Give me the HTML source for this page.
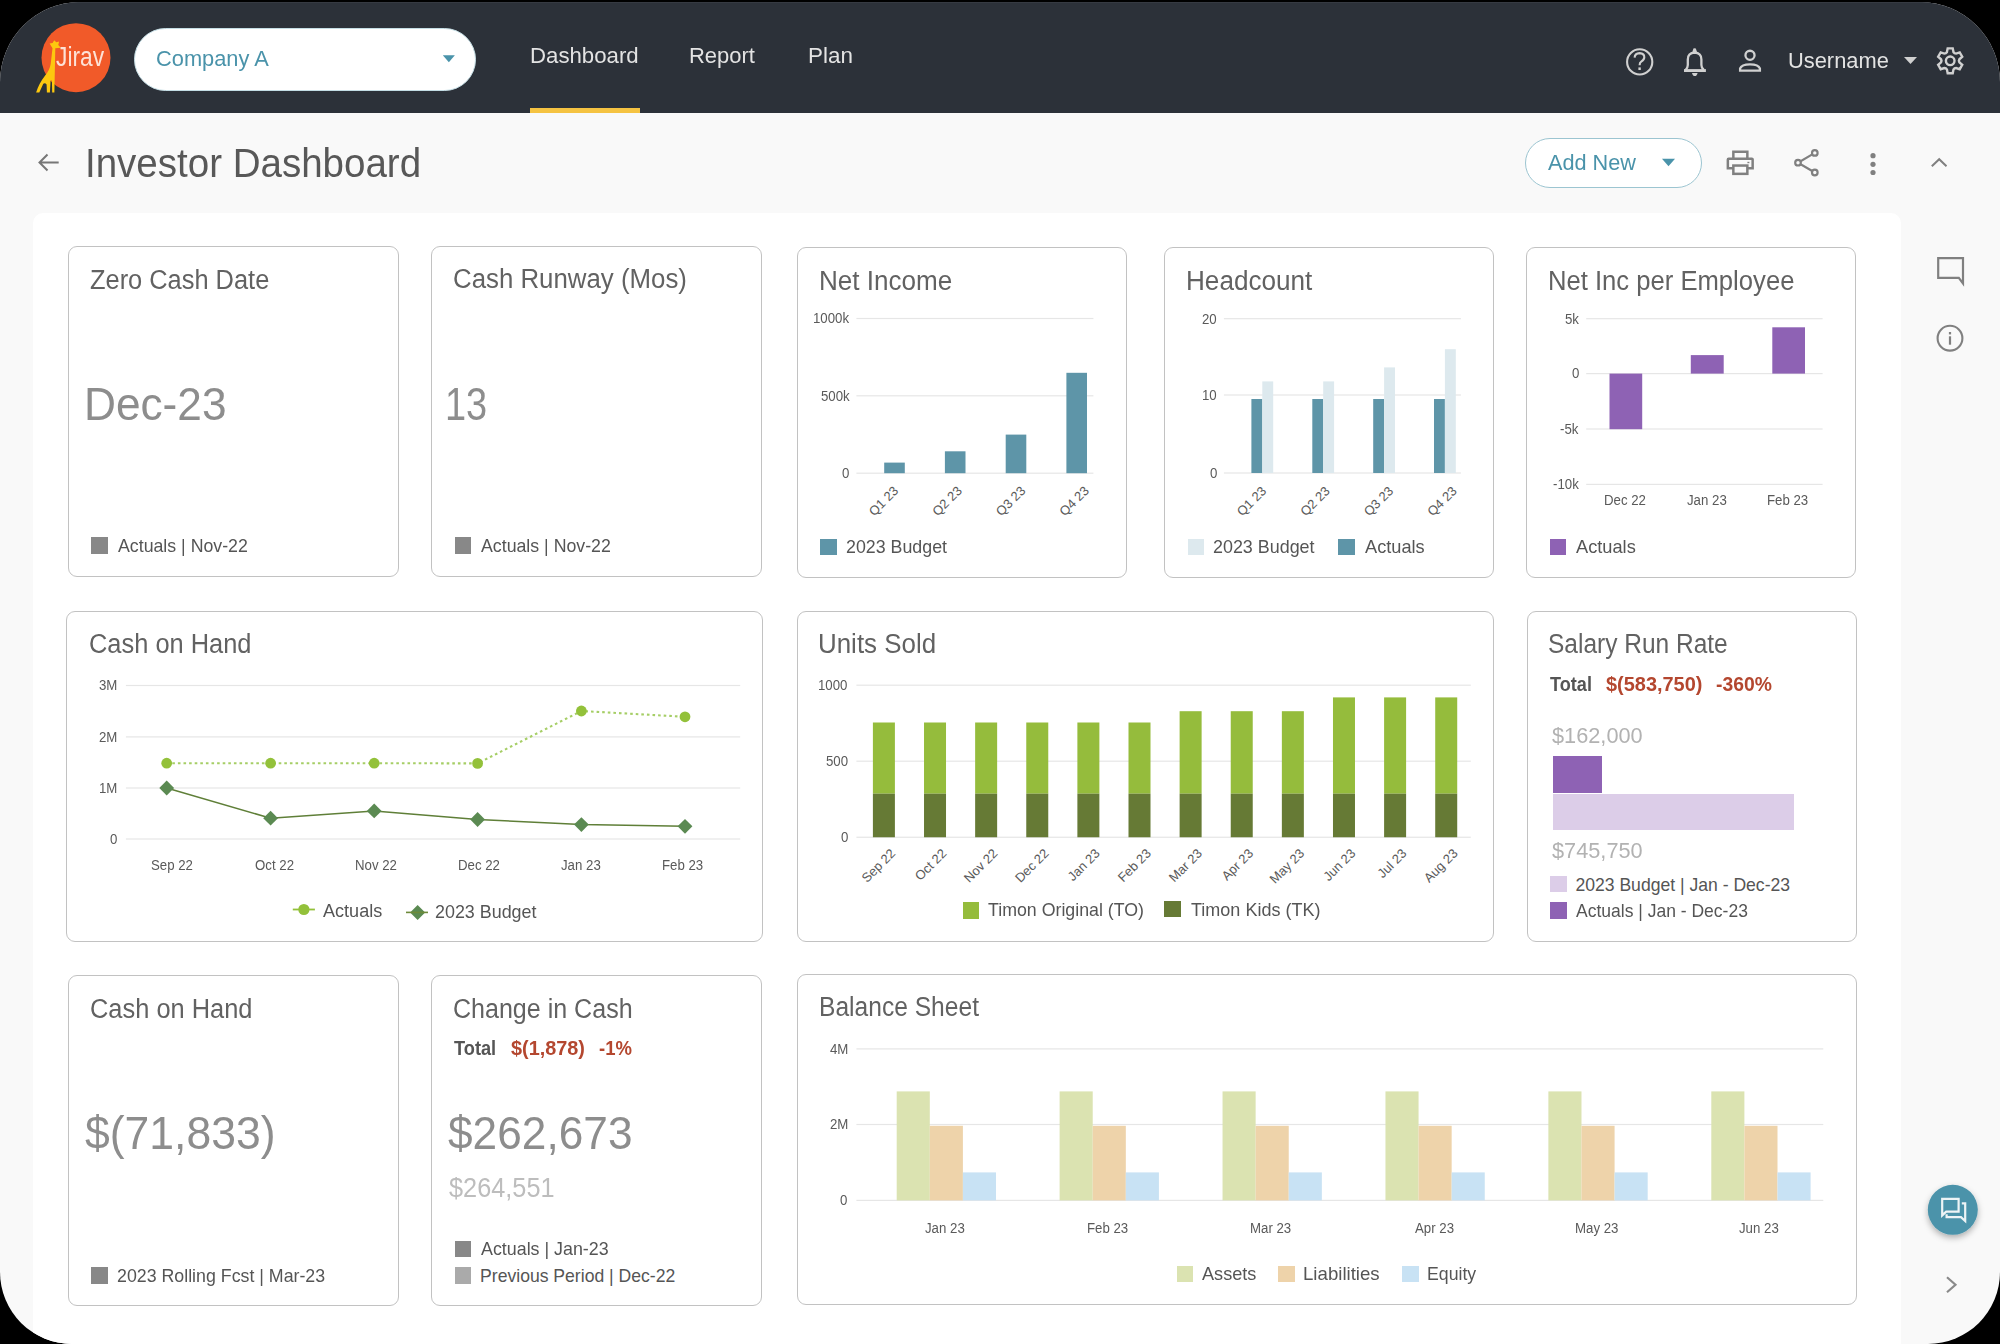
<!DOCTYPE html><html><head><meta charset="utf-8"><style>
html,body{margin:0;padding:0;background:#000;width:2000px;height:1344px;overflow:hidden}
*{box-sizing:border-box}
#app{position:absolute;left:0;top:2px;width:2000px;height:1342px;border-radius:80px 80px 72px 72px;overflow:hidden;background:#f9f9f9;font-family:"Liberation Sans",sans-serif}
#hdr{position:absolute;left:0;top:0;width:2000px;height:111px;background:#2c3139;border-top:1px solid #363a42}
#panel{position:absolute;left:33px;top:211px;width:1868px;height:1200px;background:#fff;border-radius:10px}
.card{position:absolute;border:1px solid #c2c2c2;border-radius:9px;background:#fff}
.t{position:absolute;white-space:pre;line-height:1;font-family:"Liberation Sans",sans-serif}
svg{position:absolute;left:0;top:0}
</style></head><body><div id="app">
<div id="hdr"></div><div id="panel"></div>
<div style="position:absolute;left:0;top:-2px;width:2000px;height:1344px"><div class="card" style="left:68px;top:246px;width:331px;height:331px"></div>
<div class="card" style="left:431px;top:246px;width:331px;height:331px"></div>
<div class="card" style="left:797px;top:247px;width:330px;height:331px"></div>
<div class="card" style="left:1164px;top:247px;width:330px;height:331px"></div>
<div class="card" style="left:1526px;top:247px;width:330px;height:331px"></div>
<div class="card" style="left:66px;top:611px;width:697px;height:331px"></div>
<div class="card" style="left:797px;top:611px;width:697px;height:331px"></div>
<div class="card" style="left:1527px;top:611px;width:330px;height:331px"></div>
<div class="card" style="left:68px;top:975px;width:331px;height:331px"></div>
<div class="card" style="left:431px;top:975px;width:331px;height:331px"></div>
<div class="card" style="left:797px;top:974px;width:1060px;height:331px"></div>
<div style="position:absolute;left:91.0px;top:537.0px;width:16.5px;height:16.5px;background:#888;"></div>
<div style="position:absolute;left:454.5px;top:537.0px;width:16.5px;height:16.5px;background:#888;"></div>
<div style="position:absolute;left:820.4px;top:538.5px;width:16.5px;height:16.5px;background:#5e95a8;"></div>
<div style="position:absolute;left:1187.8px;top:538.5px;width:16.5px;height:16.5px;background:#dde9ee;"></div>
<div style="position:absolute;left:1338.3px;top:538.5px;width:16.5px;height:16.5px;background:#5e95a8;"></div>
<div style="position:absolute;left:1549.6px;top:538.5px;width:16.5px;height:16.5px;background:#8e62b4;"></div>
<div style="position:absolute;left:962.5px;top:902.2px;width:16.5px;height:16.5px;background:#95bc3c;"></div>
<div style="position:absolute;left:1164.2px;top:900.8px;width:16.5px;height:16.5px;background:#667a35;"></div>
<div style="position:absolute;left:1550.0px;top:875.9px;width:16.5px;height:16.5px;background:#dccde8;"></div>
<div style="position:absolute;left:1550.0px;top:902.2px;width:16.5px;height:16.5px;background:#8e62b4;"></div>
<div style="position:absolute;left:91.3px;top:1267.0px;width:16.5px;height:16.5px;background:#888;"></div>
<div style="position:absolute;left:454.6px;top:1240.7px;width:16.5px;height:16.5px;background:#888;"></div>
<div style="position:absolute;left:454.6px;top:1267.0px;width:16.5px;height:16.5px;background:#aaa;"></div>
<div style="position:absolute;left:1176.8px;top:1265.7px;width:16.5px;height:16.5px;background:#dbe3b1;"></div>
<div style="position:absolute;left:1278.0px;top:1265.7px;width:16.5px;height:16.5px;background:#eed3aa;"></div>
<div style="position:absolute;left:1402.2px;top:1265.7px;width:16.5px;height:16.5px;background:#c8e2f4;"></div>
<div style="position:absolute;left:1552.6px;top:755.6px;width:49.5px;height:37px;background:#8e62b4;"></div>
<div style="position:absolute;left:1552.6px;top:794.2px;width:241.3px;height:36.3px;background:#dccde8;"></div>
<div style="position:absolute;left:134px;top:27.5px;width:342px;height:63px;border-radius:32px;background:#fff;border:1.5px solid #c4dde4"></div>
<div style="position:absolute;left:530px;top:107.5px;width:109.6px;height:5.5px;background:#f5c342;"></div>
<div style="position:absolute;left:1525px;top:138px;width:176.5px;height:49.5px;border-radius:25px;background:#fff;border:1.2px solid #9cc5d1"></div><svg width="2000" height="1344" viewBox="0 0 2000 1344"><circle cx="76" cy="57.7" r="34.5" fill="#f15a29"/>
<path d="M54.2,40.2 L56.3,42.3 L59.1,41.6 L58.3,44.9 L60.8,47.8 L55.3,48.3 L54.4,92.6 L52.2,92.6 L51.9,80.6 L50.6,80.6 L49.9,92.6 L46.9,92.6 L46.6,84.6 Q45.1,82.3 43.3,83.8 L39.3,92.6 L36.1,92.6 Q38.6,84 44.6,76.2 Q49.6,70.5 50.7,64 L52.5,48.3 L49.6,43.6 L52.6,43.1 Z" fill="#fdc80f"/>
<path d="M442.8,55.3 L454.9,55.3 L448.85,62.2 Z" fill="#4a93aa"/>
<circle cx="1639.7" cy="61.9" r="12.6" fill="none" stroke="#d0d0d0" stroke-width="2.1"/>
<path d="M1634.6,57.6 Q1634.8,53.2 1639.6,53.1 Q1644.4,53.3 1644.3,57.4 Q1644.1,60 1641.2,61.6 Q1639.6,62.6 1639.6,65.2" fill="none" stroke="#d0d0d0" stroke-width="2.1"/>
<rect x="1638.4" y="67.4" width="2.4" height="2.6" fill="#d0d0d0"/>
<path d="M1685.6,70 Q1687.8,68 1687.8,65 L1687.8,59.5 Q1687.8,52.8 1694.6,52.6 Q1701.4,52.8 1701.4,59.5 L1701.4,65 Q1701.4,68 1703.8,70" fill="none" stroke="#d0d0d0" stroke-width="2.3"/>
<rect x="1684" y="69.1" width="21.9" height="2.9" fill="#d0d0d0"/>
<path d="M1692.2,52.4 L1693.4,48.6 Q1694.6,47.8 1695.8,48.6 L1697.2,52.4 Z" fill="#d0d0d0"/>
<path d="M1692,72.9 L1697.6,72.9 Q1697,76 1694.8,76 Q1692.6,76 1692,72.9 Z" fill="#d0d0d0"/>
<circle cx="1750" cy="55.3" r="4.55" fill="none" stroke="#d0d0d0" stroke-width="2.3"/>
<path d="M1740.1,70.7 L1740.1,68.4 Q1741.6,64.3 1750,64.3 Q1758.4,64.3 1759.9,68.4 L1759.9,70.7 Z" fill="none" stroke="#d0d0d0" stroke-width="2.3" stroke-linejoin="miter"/>
<path d="M1904,57 L1917,57 L1910.5,64 Z" fill="#d0d0d0"/>
<path d="M1946.92,52.10 L1947.68,48.35 L1952.72,48.35 L1953.48,52.10 L1954.55,53.27 L1956.10,53.61 L1959.72,52.39 L1962.24,56.76 L1959.38,59.29 L1958.90,60.80 L1959.38,62.31 L1962.24,64.84 L1959.72,69.21 L1956.10,67.99 L1954.55,68.33 L1953.48,69.50 L1952.72,73.25 L1947.68,73.25 L1946.92,69.50 L1945.85,68.33 L1944.30,67.99 L1940.68,69.21 L1938.16,64.84 L1941.02,62.31 L1941.50,60.80 L1941.02,59.29 L1938.16,56.76 L1940.68,52.39 L1944.30,53.61 L1945.85,53.27 Z" fill="none" stroke="#d0d0d0" stroke-width="2.4" stroke-linejoin="miter"/>
<circle cx="1950.2" cy="60.8" r="4.3" fill="none" stroke="#d0d0d0" stroke-width="2.4"/>
<path d="M58.7,162.5 L39.5,162.5 M47.5,154.5 L39.5,162.5 L47.5,170.5" fill="none" stroke="#777" stroke-width="2"/>
<path d="M1662,158.8 L1675,158.8 L1668.5,166.2 Z" fill="#4a93aa"/>
<path d="M1733.35,158 L1733.35,151.65 L1747.35,151.65 L1747.35,158" fill="none" stroke="#808080" stroke-width="2.5"/>
<path d="M1733.35,168.35 L1727.85,168.35 L1727.85,159.5 Q1727.85,158.75 1728.6,158.75 L1751.9,158.75 Q1752.65,158.75 1752.65,159.5 L1752.65,168.35 L1747.35,168.35" fill="none" stroke="#808080" stroke-width="2.5"/>
<rect x="1733.35" y="165.55" width="14" height="8.3" fill="none" stroke="#808080" stroke-width="2.5"/>
<rect x="1747.4" y="161.8" width="2" height="1.4" fill="#808080"/>
<path d="M1814.8,152.9 L1798,162.7 L1814.8,172.5" fill="none" stroke="#808080" stroke-width="2.2"/>
<circle cx="1814.8" cy="152.9" r="2.8" fill="#f9f9f9" stroke="#808080" stroke-width="2.2"/>
<circle cx="1798" cy="162.7" r="2.8" fill="#f9f9f9" stroke="#808080" stroke-width="2.2"/>
<circle cx="1814.8" cy="172.5" r="2.8" fill="#f9f9f9" stroke="#808080" stroke-width="2.2"/>
<circle cx="1873" cy="155.7" r="2.6" fill="#808080"/>
<circle cx="1873" cy="164.3" r="2.6" fill="#808080"/>
<circle cx="1873" cy="172.5" r="2.6" fill="#808080"/>
<path d="M1931.8,166.3 L1939.2,159.2 L1946.5,166.3" fill="none" stroke="#808080" stroke-width="2"/>
<path d="M1938.2,258.2 L1963,258.2 L1963,283.5 L1958.8,277.8 L1938.2,277.8 Z" fill="none" stroke="#808080" stroke-width="2.2" stroke-linejoin="miter"/>
<circle cx="1950" cy="338.2" r="12.4" fill="none" stroke="#808080" stroke-width="2.1"/>
<rect x="1948.9" y="332" width="2.2" height="2.4" fill="#808080"/>
<rect x="1948.9" y="336.3" width="2.2" height="8.4" fill="#808080"/>
<defs><filter id="sh" x="-50%" y="-50%" width="200%" height="200%"><feDropShadow dx="0" dy="3" stdDeviation="3" flood-color="#000" flood-opacity="0.3"/></filter></defs>
<circle cx="1952.8" cy="1209.8" r="25" fill="#4b93aa" filter="url(#sh)"/>
<path d="M1942.2,1215.4 L1942.2,1198.8 L1958.6,1198.8 L1958.6,1211.6 L1946.2,1211.6 Z" fill="none" stroke="#eef4f6" stroke-width="2.2"/>
<path d="M1961.8,1203.3 L1965.2,1203.3 L1965.2,1221 L1961,1217.2 L1946.6,1217.2 L1946.6,1214.2" fill="none" stroke="#eef4f6" stroke-width="2.2"/>
<path d="M1947,1277.2 L1955.5,1284.7 L1947,1292.3" fill="none" stroke="#8a8a8a" stroke-width="2.2"/>
<rect x="856.4" y="317.90" width="237.00" height="1.2" fill="#e6e6e6"/>
<rect x="856.4" y="395.20" width="237.00" height="1.2" fill="#e6e6e6"/>
<rect x="856.4" y="472.60" width="237.00" height="1.2" fill="#e6e6e6"/>
<rect x="884.20" y="462.60" width="20.60" height="10.60" fill="#5e95a8"/>
<text x="899.20" y="491.60" transform="rotate(-45 899.20 491.60)" text-anchor="end" font-family="Liberation Sans" font-size="13.0" fill="#5a5a5a">Q1 23</text>
<rect x="944.90" y="451.30" width="20.60" height="21.90" fill="#5e95a8"/>
<text x="962.75" y="491.60" transform="rotate(-45 962.75 491.60)" text-anchor="end" font-family="Liberation Sans" font-size="13.0" fill="#5a5a5a">Q2 23</text>
<rect x="1005.70" y="434.60" width="20.60" height="38.60" fill="#5e95a8"/>
<text x="1026.30" y="491.60" transform="rotate(-45 1026.30 491.60)" text-anchor="end" font-family="Liberation Sans" font-size="13.0" fill="#5a5a5a">Q3 23</text>
<rect x="1066.40" y="372.80" width="20.60" height="100.40" fill="#5e95a8"/>
<text x="1089.85" y="491.60" transform="rotate(-45 1089.85 491.60)" text-anchor="end" font-family="Liberation Sans" font-size="13.0" fill="#5a5a5a">Q4 23</text>
<rect x="1223.9" y="318.10" width="237.00" height="1.2" fill="#e6e6e6"/>
<rect x="1223.9" y="394.40" width="237.00" height="1.2" fill="#e6e6e6"/>
<rect x="1223.9" y="472.40" width="237.00" height="1.2" fill="#e6e6e6"/>
<rect x="1251.40" y="399.00" width="10.90" height="74.00" fill="#5e95a8"/>
<rect x="1262.30" y="381.40" width="10.90" height="91.60" fill="#dde9ee"/>
<text x="1267.20" y="491.80" transform="rotate(-45 1267.20 491.80)" text-anchor="end" font-family="Liberation Sans" font-size="13.0" fill="#5a5a5a">Q1 23</text>
<rect x="1312.30" y="399.00" width="10.90" height="74.00" fill="#5e95a8"/>
<rect x="1323.20" y="381.40" width="10.90" height="91.60" fill="#dde9ee"/>
<text x="1330.70" y="491.80" transform="rotate(-45 1330.70 491.80)" text-anchor="end" font-family="Liberation Sans" font-size="13.0" fill="#5a5a5a">Q2 23</text>
<rect x="1373.20" y="399.00" width="10.90" height="74.00" fill="#5e95a8"/>
<rect x="1384.10" y="367.40" width="10.90" height="105.60" fill="#dde9ee"/>
<text x="1394.20" y="491.80" transform="rotate(-45 1394.20 491.80)" text-anchor="end" font-family="Liberation Sans" font-size="13.0" fill="#5a5a5a">Q3 23</text>
<rect x="1434.00" y="399.00" width="10.90" height="74.00" fill="#5e95a8"/>
<rect x="1444.90" y="349.20" width="10.90" height="123.80" fill="#dde9ee"/>
<text x="1457.70" y="491.80" transform="rotate(-45 1457.70 491.80)" text-anchor="end" font-family="Liberation Sans" font-size="13.0" fill="#5a5a5a">Q4 23</text>
<rect x="1586.2" y="318.10" width="236.40" height="1.2" fill="#e6e6e6"/>
<rect x="1586.2" y="373.00" width="236.40" height="1.2" fill="#e6e6e6"/>
<rect x="1586.2" y="428.40" width="236.40" height="1.2" fill="#e6e6e6"/>
<rect x="1586.2" y="483.80" width="236.40" height="1.2" fill="#e6e6e6"/>
<rect x="1609.50" y="373.60" width="32.70" height="55.60" fill="#8e62b4"/>
<rect x="1690.80" y="355.10" width="32.90" height="18.50" fill="#8e62b4"/>
<rect x="1772.30" y="327.30" width="32.70" height="46.30" fill="#8e62b4"/>
<rect x="125.9" y="684.90" width="614.30" height="1.2" fill="#e6e6e6"/>
<rect x="125.9" y="736.30" width="614.30" height="1.2" fill="#e6e6e6"/>
<rect x="125.9" y="787.40" width="614.30" height="1.2" fill="#e6e6e6"/>
<rect x="125.9" y="838.40" width="614.30" height="1.2" fill="#e6e6e6"/>
<polyline points="166.7,763.2 270.6,763.2 374.2,763.2 477.6,763.4 581.4,711 685,716.8" fill="none" stroke="#a6ce66" stroke-width="2.1" stroke-dasharray="2.6,3"/>
<polyline points="166.7,788 270.6,818.2 374.2,810.9 477.6,819.5 581.4,824.6 685,826.3" fill="none" stroke="#5f7f38" stroke-width="1.5"/>
<circle cx="166.7" cy="763.2" r="5.4" fill="#93c13a"/>
<circle cx="270.6" cy="763.2" r="5.4" fill="#93c13a"/>
<circle cx="374.2" cy="763.2" r="5.4" fill="#93c13a"/>
<circle cx="477.6" cy="763.4" r="5.4" fill="#93c13a"/>
<circle cx="581.4" cy="711" r="5.4" fill="#93c13a"/>
<circle cx="685" cy="716.8" r="5.4" fill="#93c13a"/>
<path d="M166.7,780.6 L174.1,788 L166.7,795.4 L159.29999999999998,788 Z" fill="#5b8a52"/>
<path d="M270.6,810.8000000000001 L278.0,818.2 L270.6,825.6 L263.20000000000005,818.2 Z" fill="#5b8a52"/>
<path d="M374.2,803.5 L381.59999999999997,810.9 L374.2,818.3 L366.8,810.9 Z" fill="#5b8a52"/>
<path d="M477.6,812.1 L485.0,819.5 L477.6,826.9 L470.20000000000005,819.5 Z" fill="#5b8a52"/>
<path d="M581.4,817.2 L588.8,824.6 L581.4,832.0 L574.0,824.6 Z" fill="#5b8a52"/>
<path d="M685,818.9 L692.4,826.3 L685,833.6999999999999 L677.6,826.3 Z" fill="#5b8a52"/>
<rect x="292.8" y="908.6" width="22.1" height="1.8" fill="#93c13a"/><circle cx="303.9" cy="909.5" r="5.6" fill="#93c13a"/>
<path d="M417.6,904.9 L425.1,912.4 L417.6,919.9 L410.1,912.4 Z" fill="#5b8a52"/><rect x="406" y="911.6" width="22" height="1.6" fill="#6e8a3a"/>
<rect x="856.4" y="684.60" width="614.40" height="1.2" fill="#e6e6e6"/>
<rect x="856.4" y="760.60" width="614.40" height="1.2" fill="#e6e6e6"/>
<rect x="856.4" y="836.65" width="614.40" height="1.2" fill="#e6e6e6"/>
<rect x="872.90" y="722.50" width="22.00" height="71.20" fill="#95bc3c"/>
<rect x="872.90" y="793.70" width="22.00" height="43.55" fill="#667a35"/>
<text x="896.20" y="854.20" transform="rotate(-45 896.20 854.20)" text-anchor="end" font-family="Liberation Sans" font-size="13.0" fill="#5a5a5a">Sep 22</text>
<rect x="924.02" y="722.50" width="22.00" height="71.20" fill="#95bc3c"/>
<rect x="924.02" y="793.70" width="22.00" height="43.55" fill="#667a35"/>
<text x="947.32" y="854.20" transform="rotate(-45 947.32 854.20)" text-anchor="end" font-family="Liberation Sans" font-size="13.0" fill="#5a5a5a">Oct 22</text>
<rect x="975.14" y="722.50" width="22.00" height="71.20" fill="#95bc3c"/>
<rect x="975.14" y="793.70" width="22.00" height="43.55" fill="#667a35"/>
<text x="998.44" y="854.20" transform="rotate(-45 998.44 854.20)" text-anchor="end" font-family="Liberation Sans" font-size="13.0" fill="#5a5a5a">Nov 22</text>
<rect x="1026.26" y="722.50" width="22.00" height="71.20" fill="#95bc3c"/>
<rect x="1026.26" y="793.70" width="22.00" height="43.55" fill="#667a35"/>
<text x="1049.56" y="854.20" transform="rotate(-45 1049.56 854.20)" text-anchor="end" font-family="Liberation Sans" font-size="13.0" fill="#5a5a5a">Dec 22</text>
<rect x="1077.38" y="722.50" width="22.00" height="71.20" fill="#95bc3c"/>
<rect x="1077.38" y="793.70" width="22.00" height="43.55" fill="#667a35"/>
<text x="1100.68" y="854.20" transform="rotate(-45 1100.68 854.20)" text-anchor="end" font-family="Liberation Sans" font-size="13.0" fill="#5a5a5a">Jan 23</text>
<rect x="1128.50" y="722.50" width="22.00" height="71.20" fill="#95bc3c"/>
<rect x="1128.50" y="793.70" width="22.00" height="43.55" fill="#667a35"/>
<text x="1151.80" y="854.20" transform="rotate(-45 1151.80 854.20)" text-anchor="end" font-family="Liberation Sans" font-size="13.0" fill="#5a5a5a">Feb 23</text>
<rect x="1179.62" y="711.20" width="22.00" height="82.50" fill="#95bc3c"/>
<rect x="1179.62" y="793.70" width="22.00" height="43.55" fill="#667a35"/>
<text x="1202.92" y="854.20" transform="rotate(-45 1202.92 854.20)" text-anchor="end" font-family="Liberation Sans" font-size="13.0" fill="#5a5a5a">Mar 23</text>
<rect x="1230.74" y="711.20" width="22.00" height="82.50" fill="#95bc3c"/>
<rect x="1230.74" y="793.70" width="22.00" height="43.55" fill="#667a35"/>
<text x="1254.04" y="854.20" transform="rotate(-45 1254.04 854.20)" text-anchor="end" font-family="Liberation Sans" font-size="13.0" fill="#5a5a5a">Apr 23</text>
<rect x="1281.86" y="711.20" width="22.00" height="82.50" fill="#95bc3c"/>
<rect x="1281.86" y="793.70" width="22.00" height="43.55" fill="#667a35"/>
<text x="1305.16" y="854.20" transform="rotate(-45 1305.16 854.20)" text-anchor="end" font-family="Liberation Sans" font-size="13.0" fill="#5a5a5a">May 23</text>
<rect x="1332.98" y="697.40" width="22.00" height="96.30" fill="#95bc3c"/>
<rect x="1332.98" y="793.70" width="22.00" height="43.55" fill="#667a35"/>
<text x="1356.28" y="854.20" transform="rotate(-45 1356.28 854.20)" text-anchor="end" font-family="Liberation Sans" font-size="13.0" fill="#5a5a5a">Jun 23</text>
<rect x="1384.10" y="697.40" width="22.00" height="96.30" fill="#95bc3c"/>
<rect x="1384.10" y="793.70" width="22.00" height="43.55" fill="#667a35"/>
<text x="1407.40" y="854.20" transform="rotate(-45 1407.40 854.20)" text-anchor="end" font-family="Liberation Sans" font-size="13.0" fill="#5a5a5a">Jul 23</text>
<rect x="1435.22" y="697.40" width="22.00" height="96.30" fill="#95bc3c"/>
<rect x="1435.22" y="793.70" width="22.00" height="43.55" fill="#667a35"/>
<text x="1458.52" y="854.20" transform="rotate(-45 1458.52 854.20)" text-anchor="end" font-family="Liberation Sans" font-size="13.0" fill="#5a5a5a">Aug 23</text>
<rect x="856.4" y="1048.30" width="966.90" height="1.2" fill="#e6e6e6"/>
<rect x="856.4" y="1123.90" width="966.90" height="1.2" fill="#e6e6e6"/>
<rect x="856.4" y="1199.80" width="966.90" height="1.2" fill="#e6e6e6"/>
<rect x="896.70" y="1091.40" width="33.10" height="109.00" fill="#dbe3b1"/>
<rect x="929.80" y="1125.80" width="33.10" height="74.60" fill="#eed3aa"/>
<rect x="962.90" y="1172.40" width="33.10" height="28.00" fill="#c8e2f4"/>
<rect x="1059.62" y="1091.40" width="33.10" height="109.00" fill="#dbe3b1"/>
<rect x="1092.72" y="1125.80" width="33.10" height="74.60" fill="#eed3aa"/>
<rect x="1125.82" y="1172.40" width="33.10" height="28.00" fill="#c8e2f4"/>
<rect x="1222.54" y="1091.40" width="33.10" height="109.00" fill="#dbe3b1"/>
<rect x="1255.64" y="1125.80" width="33.10" height="74.60" fill="#eed3aa"/>
<rect x="1288.74" y="1172.40" width="33.10" height="28.00" fill="#c8e2f4"/>
<rect x="1385.46" y="1091.40" width="33.10" height="109.00" fill="#dbe3b1"/>
<rect x="1418.56" y="1125.80" width="33.10" height="74.60" fill="#eed3aa"/>
<rect x="1451.66" y="1172.40" width="33.10" height="28.00" fill="#c8e2f4"/>
<rect x="1548.38" y="1091.40" width="33.10" height="109.00" fill="#dbe3b1"/>
<rect x="1581.48" y="1125.80" width="33.10" height="74.60" fill="#eed3aa"/>
<rect x="1614.58" y="1172.40" width="33.10" height="28.00" fill="#c8e2f4"/>
<rect x="1711.30" y="1091.40" width="33.10" height="109.00" fill="#dbe3b1"/>
<rect x="1744.40" y="1125.80" width="33.10" height="74.60" fill="#eed3aa"/>
<rect x="1777.50" y="1172.40" width="33.10" height="28.00" fill="#c8e2f4"/></svg><div class="t" style="left:89.90px;top:263px;font-size:28.198px;line-height:32px;color:#626262;transform:scaleX(0.9010);transform-origin:0 0;">Zero Cash Date</div>
<div class="t" style="left:453.08px;top:262px;font-size:28.198px;line-height:32px;color:#626262;transform:scaleX(0.9162);transform-origin:0 0;">Cash Runway (Mos)</div>
<div class="t" style="left:819.35px;top:264px;font-size:28.198px;line-height:32px;color:#626262;transform:scaleX(0.9248);transform-origin:0 0;">Net Income</div>
<div class="t" style="left:1185.75px;top:264px;font-size:28.198px;line-height:32px;color:#626262;transform:scaleX(0.9269);transform-origin:0 0;">Headcount</div>
<div class="t" style="left:1547.78px;top:264px;font-size:28.198px;line-height:32px;color:#626262;transform:scaleX(0.9090);transform-origin:0 0;">Net Inc per Employee</div>
<div class="t" style="left:88.70px;top:627px;font-size:28.198px;line-height:32px;color:#626262;transform:scaleX(0.9017);transform-origin:0 0;">Cash on Hand</div>
<div class="t" style="left:818.26px;top:627px;font-size:28.198px;line-height:32px;color:#626262;transform:scaleX(0.9192);transform-origin:0 0;">Units Sold</div>
<div class="t" style="left:1547.86px;top:627px;font-size:28.198px;line-height:32px;color:#626262;transform:scaleX(0.8691);transform-origin:0 0;">Salary Run Rate</div>
<div class="t" style="left:89.70px;top:992px;font-size:28.198px;line-height:32px;color:#626262;transform:scaleX(0.9017);transform-origin:0 0;">Cash on Hand</div>
<div class="t" style="left:453.21px;top:992px;font-size:28.198px;line-height:32px;color:#626262;transform:scaleX(0.8884);transform-origin:0 0;">Change in Cash</div>
<div class="t" style="left:818.86px;top:990px;font-size:28.198px;line-height:32px;color:#626262;transform:scaleX(0.8724);transform-origin:0 0;">Balance Sheet</div>
<div class="t" style="left:84.40px;top:378px;font-size:46.512px;line-height:52px;color:#8d8d8d;transform:scaleX(0.9507);transform-origin:0 0;">Dec-23</div>
<div class="t" style="left:445.44px;top:378px;font-size:46.512px;line-height:52px;color:#8d8d8d;transform:scaleX(0.8152);transform-origin:0 0;">13</div>
<div class="t" style="left:85.44px;top:1107px;font-size:46.512px;line-height:52px;color:#8d8d8d;transform:scaleX(0.9569);transform-origin:0 0;">$(71,833)</div>
<div class="t" style="left:448.25px;top:1107px;font-size:46.512px;line-height:52px;color:#8d8d8d;transform:scaleX(0.9513);transform-origin:0 0;">$262,673</div>
<div class="t" style="left:448.70px;top:1173px;font-size:26.745px;line-height:30px;color:#bdbdbd;transform:scaleX(0.9464);transform-origin:0 0;">$264,551</div>
<div class="t" style="left:117.80px;top:536px;font-size:17.588px;line-height:20px;color:#555;transform:scaleX(1.0094);transform-origin:0 0;">Actuals | Nov-22</div>
<div class="t" style="left:481.00px;top:536px;font-size:17.588px;line-height:20px;color:#555;transform:scaleX(1.0094);transform-origin:0 0;">Actuals | Nov-22</div>
<div class="t" style="left:845.99px;top:537px;font-size:17.588px;line-height:20px;color:#555;transform:scaleX(1.0131);transform-origin:0 0;">2023 Budget</div>
<div class="t" style="left:1212.98px;top:537px;font-size:17.588px;line-height:20px;color:#555;transform:scaleX(1.0182);transform-origin:0 0;">2023 Budget</div>
<div class="t" style="left:1365.00px;top:537px;font-size:17.588px;line-height:20px;color:#555;transform:scaleX(1.0351);transform-origin:0 0;">Actuals</div>
<div class="t" style="left:1576.40px;top:537px;font-size:17.588px;line-height:20px;color:#555;transform:scaleX(1.0368);transform-origin:0 0;">Actuals</div>
<div class="t" style="left:988.30px;top:900px;font-size:17.588px;line-height:20px;color:#555;transform:scaleX(1.0111);transform-origin:0 0;">Timon Original (TO)</div>
<div class="t" style="left:1191.20px;top:900px;font-size:17.588px;line-height:20px;color:#555;transform:scaleX(1.0248);transform-origin:0 0;">Timon Kids (TK)</div>
<div class="t" style="left:1575.40px;top:875px;font-size:17.588px;line-height:20px;color:#555;">2023 Budget | Jan - Dec-23</div>
<div class="t" style="left:1576.40px;top:901px;font-size:17.588px;line-height:20px;color:#555;transform:scaleX(0.9959);transform-origin:0 0;">Actuals | Jan - Dec-23</div>
<div class="t" style="left:117.29px;top:1266px;font-size:17.588px;line-height:20px;color:#555;transform:scaleX(1.0113);transform-origin:0 0;">2023 Rolling Fcst | Mar-23</div>
<div class="t" style="left:481.10px;top:1239px;font-size:17.588px;line-height:20px;color:#555;transform:scaleX(1.0152);transform-origin:0 0;">Actuals | Jan-23</div>
<div class="t" style="left:480.10px;top:1266px;font-size:17.588px;line-height:20px;color:#555;">Previous Period | Dec-22</div>
<div class="t" style="left:1202.00px;top:1264px;font-size:17.588px;line-height:20px;color:#555;transform:scaleX(1.0308);transform-origin:0 0;">Assets</div>
<div class="t" style="left:1303.14px;top:1264px;font-size:17.588px;line-height:20px;color:#555;transform:scaleX(1.0606);transform-origin:0 0;">Liabilities</div>
<div class="t" style="left:1427.49px;top:1264px;font-size:17.588px;line-height:20px;color:#555;transform:scaleX(1.0062);transform-origin:0 0;">Equity</div>
<div class="t" style="left:1549.60px;top:672px;font-size:20.785px;line-height:23px;color:#555;transform:scaleX(0.8723);transform-origin:0 0;font-weight:700;">Total</div>
<div class="t" style="left:1606.00px;top:672px;font-size:20.785px;line-height:23px;color:#b4472f;transform:scaleX(0.9596);transform-origin:0 0;font-weight:700;">$(583,750)</div>
<div class="t" style="left:1716.07px;top:672px;font-size:20.785px;line-height:23px;color:#b4472f;transform:scaleX(0.9310);transform-origin:0 0;font-weight:700;">-360%</div>
<div class="t" style="left:454.10px;top:1036px;font-size:20.785px;line-height:23px;color:#555;transform:scaleX(0.8766);transform-origin:0 0;font-weight:700;">Total</div>
<div class="t" style="left:511.00px;top:1036px;font-size:20.785px;line-height:23px;color:#b4472f;transform:scaleX(0.9566);transform-origin:0 0;font-weight:700;">$(1,878)</div>
<div class="t" style="left:598.81px;top:1036px;font-size:20.785px;line-height:23px;color:#b4472f;transform:scaleX(0.8914);transform-origin:0 0;font-weight:700;">-1%</div>
<div class="t" style="left:1551.80px;top:723px;font-size:22.093px;line-height:25px;color:#b2b2b2;transform:scaleX(0.9846);transform-origin:0 0;">$162,000</div>
<div class="t" style="left:1551.80px;top:838px;font-size:22.093px;line-height:25px;color:#b2b2b2;transform:scaleX(0.9846);transform-origin:0 0;">$745,750</div>
<div class="t" style="left:55.86px;top:41px;font-size:27.181px;line-height:31px;color:#fde2d6;transform:scaleX(0.8375);transform-origin:0 0;">Jirav</div>
<div class="t" style="left:156.04px;top:45px;font-size:22.820px;line-height:26px;color:#4a93aa;transform:scaleX(0.9564);transform-origin:0 0;">Company A</div>
<div class="t" style="left:530.06px;top:42px;font-size:22.966px;line-height:26px;color:#e3e3e3;transform:scaleX(0.9679);transform-origin:0 0;">Dashboard</div>
<div class="t" style="left:689.09px;top:42px;font-size:22.966px;line-height:26px;color:#e3e3e3;transform:scaleX(0.9567);transform-origin:0 0;">Report</div>
<div class="t" style="left:807.75px;top:42px;font-size:22.966px;line-height:26px;color:#e3e3e3;transform:scaleX(0.9767);transform-origin:0 0;">Plan</div>
<div class="t" style="left:1787.67px;top:47px;font-size:22.675px;line-height:26px;color:#e3e3e3;transform:scaleX(0.9647);transform-origin:0 0;">Username</div>
<div class="t" style="left:84.75px;top:140px;font-size:41.062px;line-height:46px;color:#585858;transform:scaleX(0.9381);transform-origin:0 0;">Investor Dashboard</div>
<div class="t" style="left:1547.50px;top:150px;font-size:21.803px;line-height:25px;color:#4a93aa;transform:scaleX(0.9943);transform-origin:0 0;">Add New</div>
<div class="t" style="left:813.00px;top:310px;font-size:13.954px;line-height:16px;color:#5a5a5a;transform:scaleX(0.9500);transform-origin:0 0;">1000k</div>
<div class="t" style="left:820.60px;top:388px;font-size:13.954px;line-height:16px;color:#5a5a5a;transform:scaleX(0.9500);transform-origin:0 0;">500k</div>
<div class="t" style="left:842.45px;top:465px;font-size:13.954px;line-height:16px;color:#5a5a5a;transform:scaleX(0.9500);transform-origin:0 0;">0</div>
<div class="t" style="left:1202.35px;top:311px;font-size:13.954px;line-height:16px;color:#5a5a5a;transform:scaleX(0.9500);transform-origin:0 0;">20</div>
<div class="t" style="left:1202.35px;top:387px;font-size:13.954px;line-height:16px;color:#5a5a5a;transform:scaleX(0.9500);transform-origin:0 0;">10</div>
<div class="t" style="left:1209.95px;top:465px;font-size:13.954px;line-height:16px;color:#5a5a5a;transform:scaleX(0.9500);transform-origin:0 0;">0</div>
<div class="t" style="left:1565.00px;top:311px;font-size:13.954px;line-height:16px;color:#5a5a5a;transform:scaleX(0.9500);transform-origin:0 0;">5k</div>
<div class="t" style="left:1571.65px;top:365px;font-size:13.954px;line-height:16px;color:#5a5a5a;transform:scaleX(0.9500);transform-origin:0 0;">0</div>
<div class="t" style="left:1560.25px;top:421px;font-size:13.954px;line-height:16px;color:#5a5a5a;transform:scaleX(0.9500);transform-origin:0 0;">-5k</div>
<div class="t" style="left:1552.65px;top:476px;font-size:13.954px;line-height:16px;color:#5a5a5a;transform:scaleX(0.9500);transform-origin:0 0;">-10k</div>
<div class="t" style="left:1604.12px;top:492px;font-size:13.954px;line-height:16px;color:#5a5a5a;transform:scaleX(0.9500);transform-origin:0 0;">Dec 22</div>
<div class="t" style="left:1687.05px;top:492px;font-size:13.954px;line-height:16px;color:#5a5a5a;transform:scaleX(0.9500);transform-origin:0 0;">Jan 23</div>
<div class="t" style="left:1767.10px;top:492px;font-size:13.954px;line-height:16px;color:#5a5a5a;transform:scaleX(0.9500);transform-origin:0 0;">Feb 23</div>
<div class="t" style="left:99.15px;top:677px;font-size:13.954px;line-height:16px;color:#5a5a5a;transform:scaleX(0.9500);transform-origin:0 0;">3M</div>
<div class="t" style="left:99.15px;top:729px;font-size:13.954px;line-height:16px;color:#5a5a5a;transform:scaleX(0.9500);transform-origin:0 0;">2M</div>
<div class="t" style="left:99.15px;top:780px;font-size:13.954px;line-height:16px;color:#5a5a5a;transform:scaleX(0.9500);transform-origin:0 0;">1M</div>
<div class="t" style="left:109.60px;top:831px;font-size:13.954px;line-height:16px;color:#5a5a5a;transform:scaleX(0.9500);transform-origin:0 0;">0</div>
<div class="t" style="left:150.93px;top:857px;font-size:13.954px;line-height:16px;color:#5a5a5a;transform:scaleX(0.9500);transform-origin:0 0;">Sep 22</div>
<div class="t" style="left:255.23px;top:857px;font-size:13.954px;line-height:16px;color:#5a5a5a;transform:scaleX(0.9500);transform-origin:0 0;">Oct 22</div>
<div class="t" style="left:355.23px;top:857px;font-size:13.954px;line-height:16px;color:#5a5a5a;transform:scaleX(0.9500);transform-origin:0 0;">Nov 22</div>
<div class="t" style="left:457.82px;top:857px;font-size:13.954px;line-height:16px;color:#5a5a5a;transform:scaleX(0.9500);transform-origin:0 0;">Dec 22</div>
<div class="t" style="left:561.05px;top:857px;font-size:13.954px;line-height:16px;color:#5a5a5a;transform:scaleX(0.9500);transform-origin:0 0;">Jan 23</div>
<div class="t" style="left:662.40px;top:857px;font-size:13.954px;line-height:16px;color:#5a5a5a;transform:scaleX(0.9500);transform-origin:0 0;">Feb 23</div>
<div class="t" style="left:322.50px;top:901px;font-size:17.878px;line-height:20px;color:#555;transform:scaleX(1.0121);transform-origin:0 0;">Actuals</div>
<div class="t" style="left:434.80px;top:902px;font-size:17.878px;line-height:20px;color:#555;transform:scaleX(1.0020);transform-origin:0 0;">2023 Budget</div>
<div class="t" style="left:818.15px;top:677px;font-size:13.954px;line-height:16px;color:#5a5a5a;transform:scaleX(0.9500);transform-origin:0 0;">1000</div>
<div class="t" style="left:825.75px;top:753px;font-size:13.954px;line-height:16px;color:#5a5a5a;transform:scaleX(0.9500);transform-origin:0 0;">500</div>
<div class="t" style="left:840.95px;top:829px;font-size:13.954px;line-height:16px;color:#5a5a5a;transform:scaleX(0.9500);transform-origin:0 0;">0</div>
<div class="t" style="left:830.00px;top:1041px;font-size:13.954px;line-height:16px;color:#5a5a5a;transform:scaleX(0.9500);transform-origin:0 0;">4M</div>
<div class="t" style="left:830.00px;top:1116px;font-size:13.954px;line-height:16px;color:#5a5a5a;transform:scaleX(0.9500);transform-origin:0 0;">2M</div>
<div class="t" style="left:840.45px;top:1192px;font-size:13.954px;line-height:16px;color:#5a5a5a;transform:scaleX(0.9500);transform-origin:0 0;">0</div>
<div class="t" style="left:924.80px;top:1220px;font-size:13.954px;line-height:16px;color:#5a5a5a;transform:scaleX(0.9500);transform-origin:0 0;">Jan 23</div>
<div class="t" style="left:1086.77px;top:1220px;font-size:13.954px;line-height:16px;color:#5a5a5a;transform:scaleX(0.9500);transform-origin:0 0;">Feb 23</div>
<div class="t" style="left:1249.69px;top:1220px;font-size:13.954px;line-height:16px;color:#5a5a5a;transform:scaleX(0.9500);transform-origin:0 0;">Mar 23</div>
<div class="t" style="left:1414.51px;top:1220px;font-size:13.954px;line-height:16px;color:#5a5a5a;transform:scaleX(0.9500);transform-origin:0 0;">Apr 23</div>
<div class="t" style="left:1574.58px;top:1220px;font-size:13.954px;line-height:16px;color:#5a5a5a;transform:scaleX(0.9500);transform-origin:0 0;">May 23</div>
<div class="t" style="left:1739.40px;top:1220px;font-size:13.954px;line-height:16px;color:#5a5a5a;transform:scaleX(0.9500);transform-origin:0 0;">Jun 23</div></div></div></body></html>
